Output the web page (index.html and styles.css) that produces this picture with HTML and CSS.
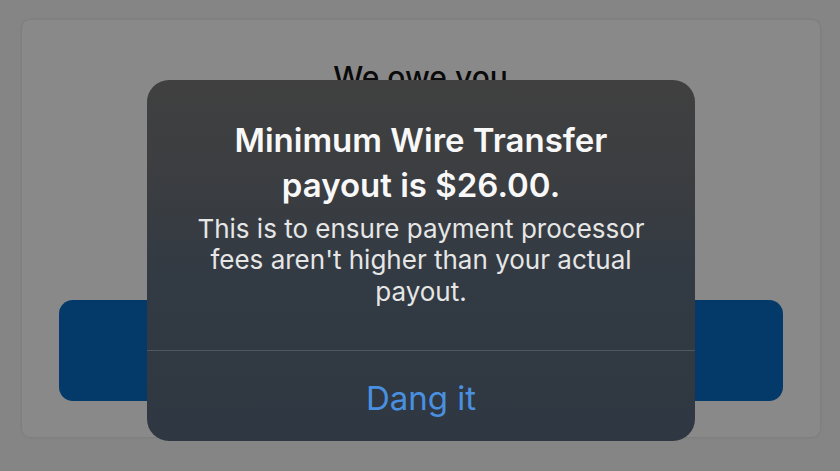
FILE: index.html
```html
<!DOCTYPE html>
<html>
<head>
<meta charset="utf-8">
<link rel="stylesheet" href="styles.css">
</head>
<body>
<div class="screen">
  <div class="card">
    <h1 class="owe">We owe you</h1>
    <div class="spacer"></div>
    <div class="primary"></div>
  </div>
  <div class="alert">
    <div class="alert-body">
      <h2 class="alert-title">Minimum Wire Transfer<br>payout is $26.00.</h2>
      <p class="alert-msg">This is to ensure payment processor<br>fees aren't higher than your actual<br>payout.</p>
    </div>
    <div class="alert-action">Dang it</div>
  </div>
</div>
</body>
</html>
```
FILE: styles.css
```css
html, body {
  margin: 0;
  padding: 0;
  width: 840px;
  height: 471px;
  overflow: hidden;
  background: #858585;
}
.screen {
  position: relative;
  width: 840px;
  height: 471px;
  padding: 20px 20px 0 22px;
  box-sizing: border-box;
}
.card {
  width: 798px;
  height: 417px;
  background: #898989;
  border-radius: 8px;
  box-shadow: 0 0 3px rgba(0,0,0,0.12);
  box-sizing: border-box;
  padding: 37px 37px 0 36px;
  display: flex;
  flex-direction: column;
  align-items: center;
}
.owe {
  margin: 0;
  font-family: Inter, "Liberation Sans", sans-serif;
  font-weight: 500;
  font-size: 30px;
  line-height: 40px;
  color: #0a0a0a;
}
.spacer { height: 203px; }
.primary {
  width: 724px;
  height: 101px;
  background: #033a6a;
  border-radius: 14px;
}
.alert {
  position: absolute;
  left: 147px;
  top: 80px;
  width: 548px;
  height: 361px;
  border-radius: 22px;
  background: linear-gradient(to bottom, #404040 0%, #3c3e41 25%, #323a43 55%, #2f3842 100%);
  display: flex;
  flex-direction: column;
  overflow: hidden;
  font-family: Inter, "Noto Sans", sans-serif;
}
.alert-body {
  height: 271px;
  border-bottom: 1px solid #4b5763;
  box-sizing: border-box;
  padding-top: 38px;
  text-align: center;
}
.alert-title {
  margin: 0;
  font-size: 33px;
  line-height: 45px;
  font-weight: 600;
  color: #f8f8f8;
}
.alert-msg {
  margin: 4.5px 0 0;
  font-size: 26px;
  line-height: 31.5px;
  font-weight: 400;
  color: #e6e6e6;
}
.alert-action {
  flex: 1;
  display: flex;
  align-items: center;
  justify-content: center;
  font-size: 33px;
  color: #4a90e0;
  padding-top: 4px;
}
```
